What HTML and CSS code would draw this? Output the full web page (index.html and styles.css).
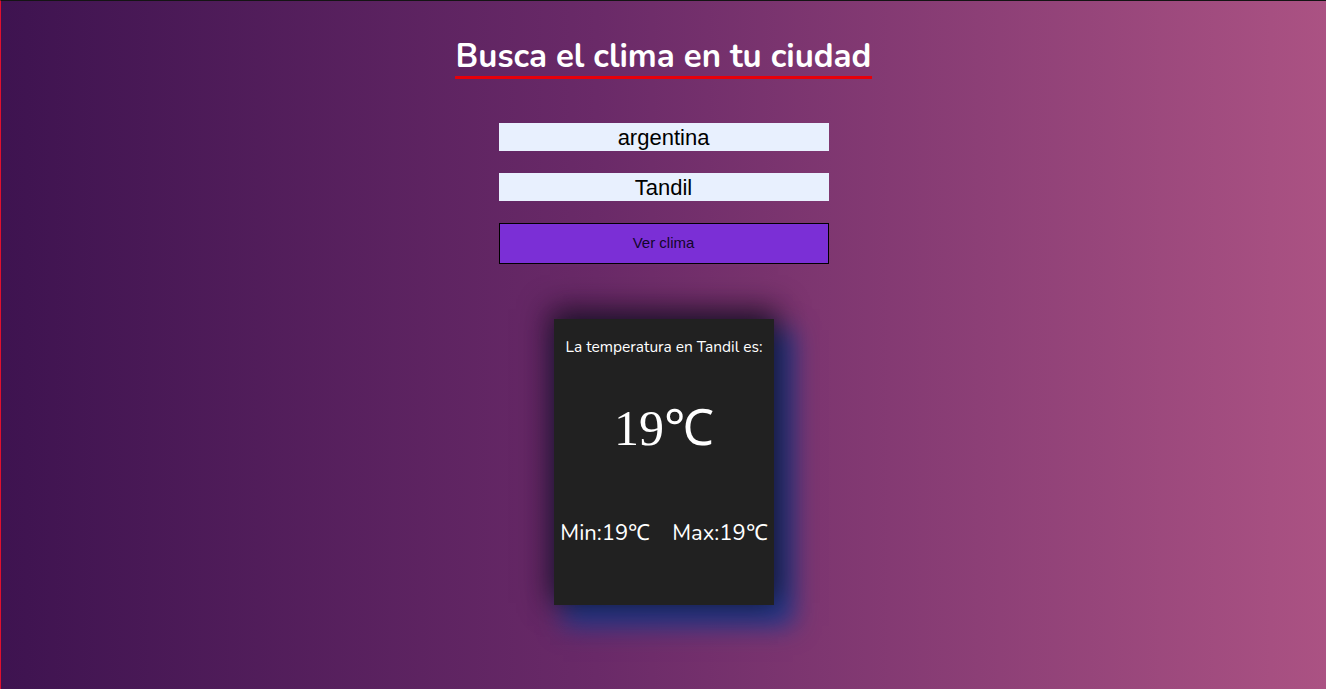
FILE: index.html
```html
<!DOCTYPE html>
<html lang="es">
<head>
<meta charset="utf-8">
<title>Clima</title>
<link rel="stylesheet" href="styles.css">
</head>
<body>
<main class="page">
  <header class="head">
    <h1 class="title">Busca el clima en tu ciudad</h1>
  </header>
  <form class="form">
    <input class="field" type="text" value="argentina">
    <input class="field" type="text" value="Tandil">
    <button class="btn" type="button">Ver clima</button>
  </form>
  <section class="card">
    <p class="card-label">La temperatura en Tandil es:</p>
    <p class="card-temp">19℃</p>
    <div class="card-range">
      <span class="range-item">Min:19<span class="deg">℃</span></span>
      <span class="range-item">Max:19<span class="deg">℃</span></span>
    </div>
  </section>
</main>
</body>
</html>
```

FILE: styles.css
```css
html, body {
  margin: 0;
  padding: 0;
  height: 100%;
}
body {
  border-top: 1px solid #141414;
  border-left: 1px solid #e0102e;
  box-sizing: border-box;
  background: linear-gradient(90deg, #3e1350 0%, #6a2a68 45%, #ab5283 100%);
  font-family: "Nunito", "Lato", "Open Sans", sans-serif;
  overflow: hidden;
}
.page {
  display: flex;
  flex-direction: column;
  align-items: center;
}
.head {
  padding-top: 37px;
}
.title {
  margin: 0;
  display: inline-block;
  color: #fff;
  font-size: 33px;
  font-weight: 700;
  line-height: 38px;
  border-bottom: 3px solid #e8000a;
  padding: 0 1px;
}
.form {
  margin-top: 44px;
  display: flex;
  flex-direction: column;
  gap: 22px;
  width: 330px;
}
.field {
  box-sizing: border-box;
  width: 330px;
  height: 28px;
  border: none;
  outline: none;
  background: #e8f0fe;
  text-align: center;
  font-family: "Liberation Sans", Arial, sans-serif;
  font-size: 22px;
  color: #000;
  padding: 1px 0 0;
}
.btn {
  box-sizing: border-box;
  width: 330px;
  height: 41px;
  background: #7b2fd6;
  border: 1px solid #000;
  font-family: "Liberation Sans", Arial, sans-serif;
  font-size: 15px;
  color: #12062a;
  padding: 0 0 2px;
}
.card {
  margin-top: 55px;
  margin-left: 1px;
  width: 220px;
  height: 286px;
  box-sizing: border-box;
  background: #212121;
  color: #fff;
  display: flex;
  flex-direction: column;
  align-items: center;
  box-shadow: 0 -6px 28px 4px rgba(20, 10, 25, 0.85), 14px 16px 24px 5px #203a8e;
  padding-top: 18px;
}
.card-label {
  margin: 0;
  font-size: 15.5px;
  line-height: 20px;
}
.card-temp {
  margin: 45px 0 0;
  font-family: "Liberation Serif", "Times New Roman", serif;
  font-size: 50px;
  line-height: 52px;
}
.card-range {
  margin-top: 66px;
  display: flex;
  gap: 22px;
  font-size: 22px;
  line-height: 26px;
}
.deg {
  font-family: "Liberation Serif", "Times New Roman", serif;
  font-size: 22px;
}
```
